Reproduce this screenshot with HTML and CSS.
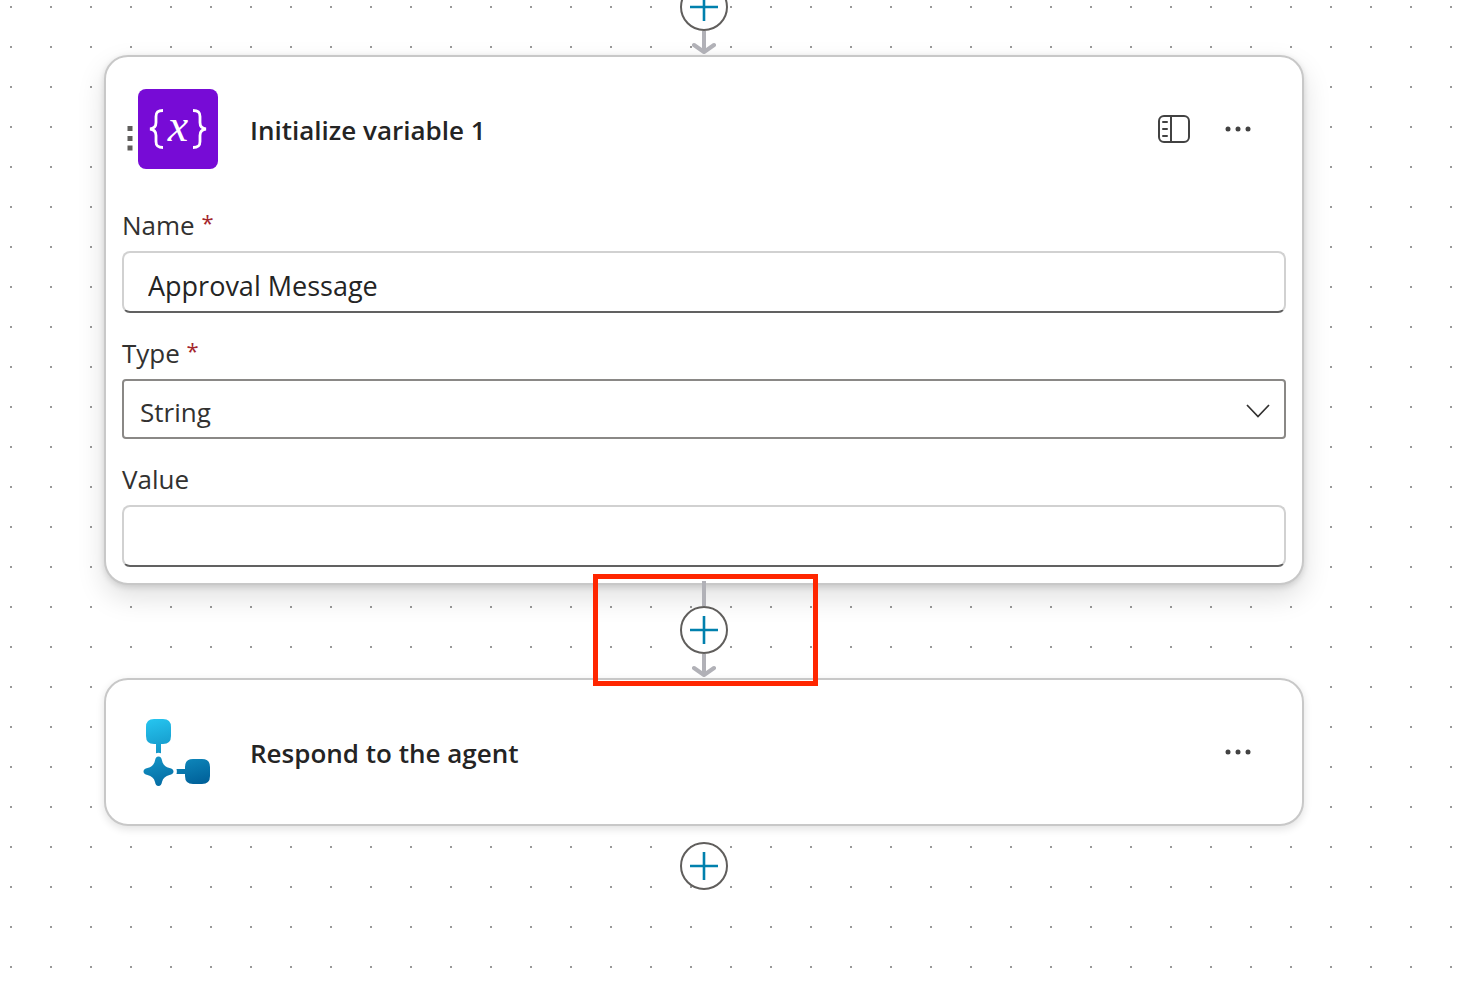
FILE: index.html
```html
<!DOCTYPE html>
<html lang="en">
<head>
<meta charset="utf-8">
<title>Flow designer</title>
<link rel="stylesheet" href="styles.css">
</head>
<body>
<svg class="defs" aria-hidden="true">
  <defs>
    <linearGradient id="flow" gradientUnits="userSpaceOnUse" x1="20" y1="6" x2="40" y2="78">
      <stop offset="0" stop-color="#25c3ee"/>
      <stop offset="1" stop-color="#00619a"/>
    </linearGradient>
    <symbol id="plus" viewBox="0 0 44 44"><path d="M22 8v28M8 22h28" stroke="#0080ad" stroke-width="2.600" fill="none"/></symbol>
    <symbol id="arrow" viewBox="0 0 24 24"><path d="M12 0v20" stroke="#b1b1b7" stroke-width="4" fill="none"/><path d="M2 14l10 7 10-7" stroke="#b1b1b7" stroke-width="4" stroke-linecap="round" stroke-linejoin="round" fill="none"/></symbol>
    <symbol id="dots" viewBox="0 0 48 48"><g fill="#424242"><circle cx="14" cy="24" r="2.500"/><circle cx="24" cy="24" r="2.500"/><circle cx="34" cy="24" r="2.500"/></g></symbol>
  </defs>
</svg>
<main class="canvas">
  <div class="connector connector-top">
    <button class="add" type="button" aria-label="Insert a step"><svg><use href="#plus"/></svg></button>
    <svg class="arrow" aria-hidden="true"><use href="#arrow"/></svg>
  </div>

  <section class="card card-open">
    <header class="card-head card-head-drag">
      <svg class="handle" viewBox="0 0 12 80" aria-hidden="true"><path d="M1.500 37h5v5h-5zM1.500 47h5v5h-5zM1.500 56.500h5v5h-5z" fill="#605e5c"/></svg>
      <svg class="logo" viewBox="0 0 80 80" aria-hidden="true">
        <rect width="80" height="80" rx="8" fill="#770bd6"/>
        <path d="M25 21.500c-5 0-7 1.500-7 6v6c0 4-1.500 6-6 6.500 4.500.5 6 2.500 6 6.500v6c0 4.500 2 6 7 6M55 21.500c5 0 7 1.500 7 6v6c0 4 1.500 6 6 6.500-4.500.5-6 2.500-6 6.500v6c0 4.500-2 6-7 6" fill="none" stroke="#fff" stroke-width="2.800"/>
        <text class="logo-x" x="40" y="52" text-anchor="middle">x</text>
      </svg>
      <h2 class="title">Initialize variable 1</h2>
      <div class="actions">
        <button class="icon-button" type="button" aria-label="Pin action">
          <svg viewBox="0 0 48 48"><g fill="none" stroke="#424242" stroke-width="2"><rect x="9" y="11" width="30" height="26" rx="5"/><path d="M21 11v26"/><path d="M13 17h4M13 24h4M13 31h4" stroke-linecap="round"/></g></svg>
        </button>
        <button class="icon-button" type="button" aria-label="More commands"><svg><use href="#dots"/></svg></button>
      </div>
    </header>
    <form class="fields">
      <div class="field">
        <label class="label" for="name">Name <span class="required">*</span></label>
        <input class="input" id="name" type="text" value="Approval Message">
      </div>
      <div class="field">
        <label class="label" for="type">Type <span class="required">*</span></label>
        <div class="select-wrap">
          <select class="select" id="type"><option>String</option></select>
          <svg class="chevron" viewBox="0 0 24 14" aria-hidden="true"><path d="M1 1l11 11.500L23 1" fill="none" stroke="#323130" stroke-width="1.700"/></svg>
        </div>
      </div>
      <div class="field">
        <label class="label" for="value">Value</label>
        <input class="input" id="value" type="text">
      </div>
    </form>
  </section>

  <div class="connector">
    <span class="line"></span>
    <button class="add" type="button" aria-label="Insert a step"><svg><use href="#plus"/></svg></button>
    <svg class="arrow" aria-hidden="true"><use href="#arrow"/></svg>
    <span class="highlight"></span>
  </div>

  <section class="card">
    <header class="card-head">
      <svg class="logo" viewBox="0 0 80 80" aria-hidden="true">
        <g fill="url(#flow)">
          <path d="M16 7h9q8 0 8 8v9q0 8-8 8h-2v9.300q-2.500-1-5 0V32h-2q-8 0-8-8v-9q0-8 8-8z"/>
          <path d="M20.500 44.500c2 0 3 1.500 3.500 4 1 4.500 3.500 6.500 7.500 7.500 2.500.5 4 1.500 4 3.500s-1.500 3-4 3.500c-4 1-6.500 3-7.500 7-.5 2.500-1.500 4-3.500 4s-3-1.500-3.500-4c-1-4-3.500-6-7.500-7-2.500-.5-4-1.500-4-3.500s1.500-3 4-3.500c4-1 6.500-3 7.500-7.500.5-2.500 1.500-4 3.500-4z"/>
          <path d="M38.500 57H47v-2q0-8 8-8h9q8 0 8 8v9q0 8-8 8h-9q-8 0-8-8v-2h-8.500q.7-2.500 0-5z"/>
        </g>
      </svg>
      <h2 class="title">Respond to the agent</h2>
      <div class="actions">
        <button class="icon-button" type="button" aria-label="More commands"><svg><use href="#dots"/></svg></button>
      </div>
    </header>
  </section>

  <div class="connector connector-end">
    <button class="add" type="button" aria-label="Insert a step"><svg><use href="#plus"/></svg></button>
  </div>
</main>
</body>
</html>
```
FILE: styles.css
```css
* { box-sizing: border-box; }

body {
  margin: 0;
  background: #fff;
  color: #242424;
  font-family: "Segoe UI", "Open Sans", "Noto Sans", sans-serif;
  font-size: 26px;
  line-height: 36px;
}

.defs { position: absolute; width: 0; height: 0; }

.canvas {
  display: flow-root;
  min-height: 100vh;
  overflow: hidden;
  padding: 0 168px 0 104px;
  background-image: conic-gradient(from 270deg at 2px 2px, #999 90deg, transparent 0);
  background-position: 10px 6px;
  background-size: 40px 40px;
}

.connector {
  position: relative;
  z-index: 1;
  display: flex;
  flex-direction: column;
  align-items: center;
}

.connector-top { margin-top: -17px; }
.connector-end { padding-top: 16px; }

.line {
  width: 4px;
  height: 25px;
  margin-top: -4px;
  background: #b1b1b7;
}

.add {
  width: 48px;
  height: 48px;
  padding: 0;
  border: 2px solid #605e5c;
  border-radius: 50%;
  background: #fff;
}

.add svg { display: block; width: 44px; height: 44px; }
.arrow { display: block; width: 24px; height: 24px; }

.highlight {
  position: absolute;
  top: -11px;
  left: calc(50% - 111px);
  width: 225px;
  height: 112px;
  border: 5px solid #ff2600;
}

.card {
  border: 2px solid #c8c8c8;
  border-radius: 24px;
  background: #fff;
  box-shadow: 0 3px 8px rgba(0, 0, 0, .12);
}

.card-open { box-shadow: 0 12px 28px rgba(0, 0, 0, .13), 0 2px 6px rgba(0, 0, 0, .13); }

.card-head {
  display: flex;
  align-items: center;
  padding: 32px 40px 32px 32px;
}

.card-head-drag { padding-left: 20px; }
.handle { width: 12px; height: 80px; }
.logo { width: 80px; height: 80px; }

.logo-x {
  fill: #fff;
  font: italic 46px "Liberation Serif", serif;
}

.title {
  flex: 1;
  margin: 0 32px;
  padding-top: 2px;
  font-size: 26px;
  font-weight: 600;
  line-height: 36px;
}

.actions { display: flex; gap: 16px; }

.icon-button {
  width: 48px;
  height: 48px;
  padding: 0;
  border: 0;
  background: none;
}

.icon-button svg { display: block; width: 48px; height: 48px; }

.fields {
  display: flex;
  flex-direction: column;
  gap: 22px;
  padding: 6px 16px 16px;
}

.field {
  display: flex;
  flex-direction: column;
  gap: 8px;
}

.label { color: #323130; }

.required {
  color: #a4262c;
  font-size: 22px;
  line-height: 24px;
  vertical-align: 4px;
}

.input,
.select {
  display: block;
  width: 100%;
  margin: 0;
  background: #fff;
  font: inherit;
}

.input {
  height: 62px;
  padding: 6px 24px 0;
  border: 2px solid #d1d1d1;
  border-bottom-color: #616161;
  border-radius: 8px;
  color: #242424;
  font-size: 27px;
}

.select {
  height: 60px;
  padding: 6px 48px 0 16px;
  border: 2px solid #8a8886;
  border-radius: 4px;
  color: #323130;
  appearance: none;
}

.select-wrap { position: relative; }

.chevron {
  position: absolute;
  top: 25px;
  right: 16px;
  width: 24px;
  height: 14px;
  pointer-events: none;
}
```
